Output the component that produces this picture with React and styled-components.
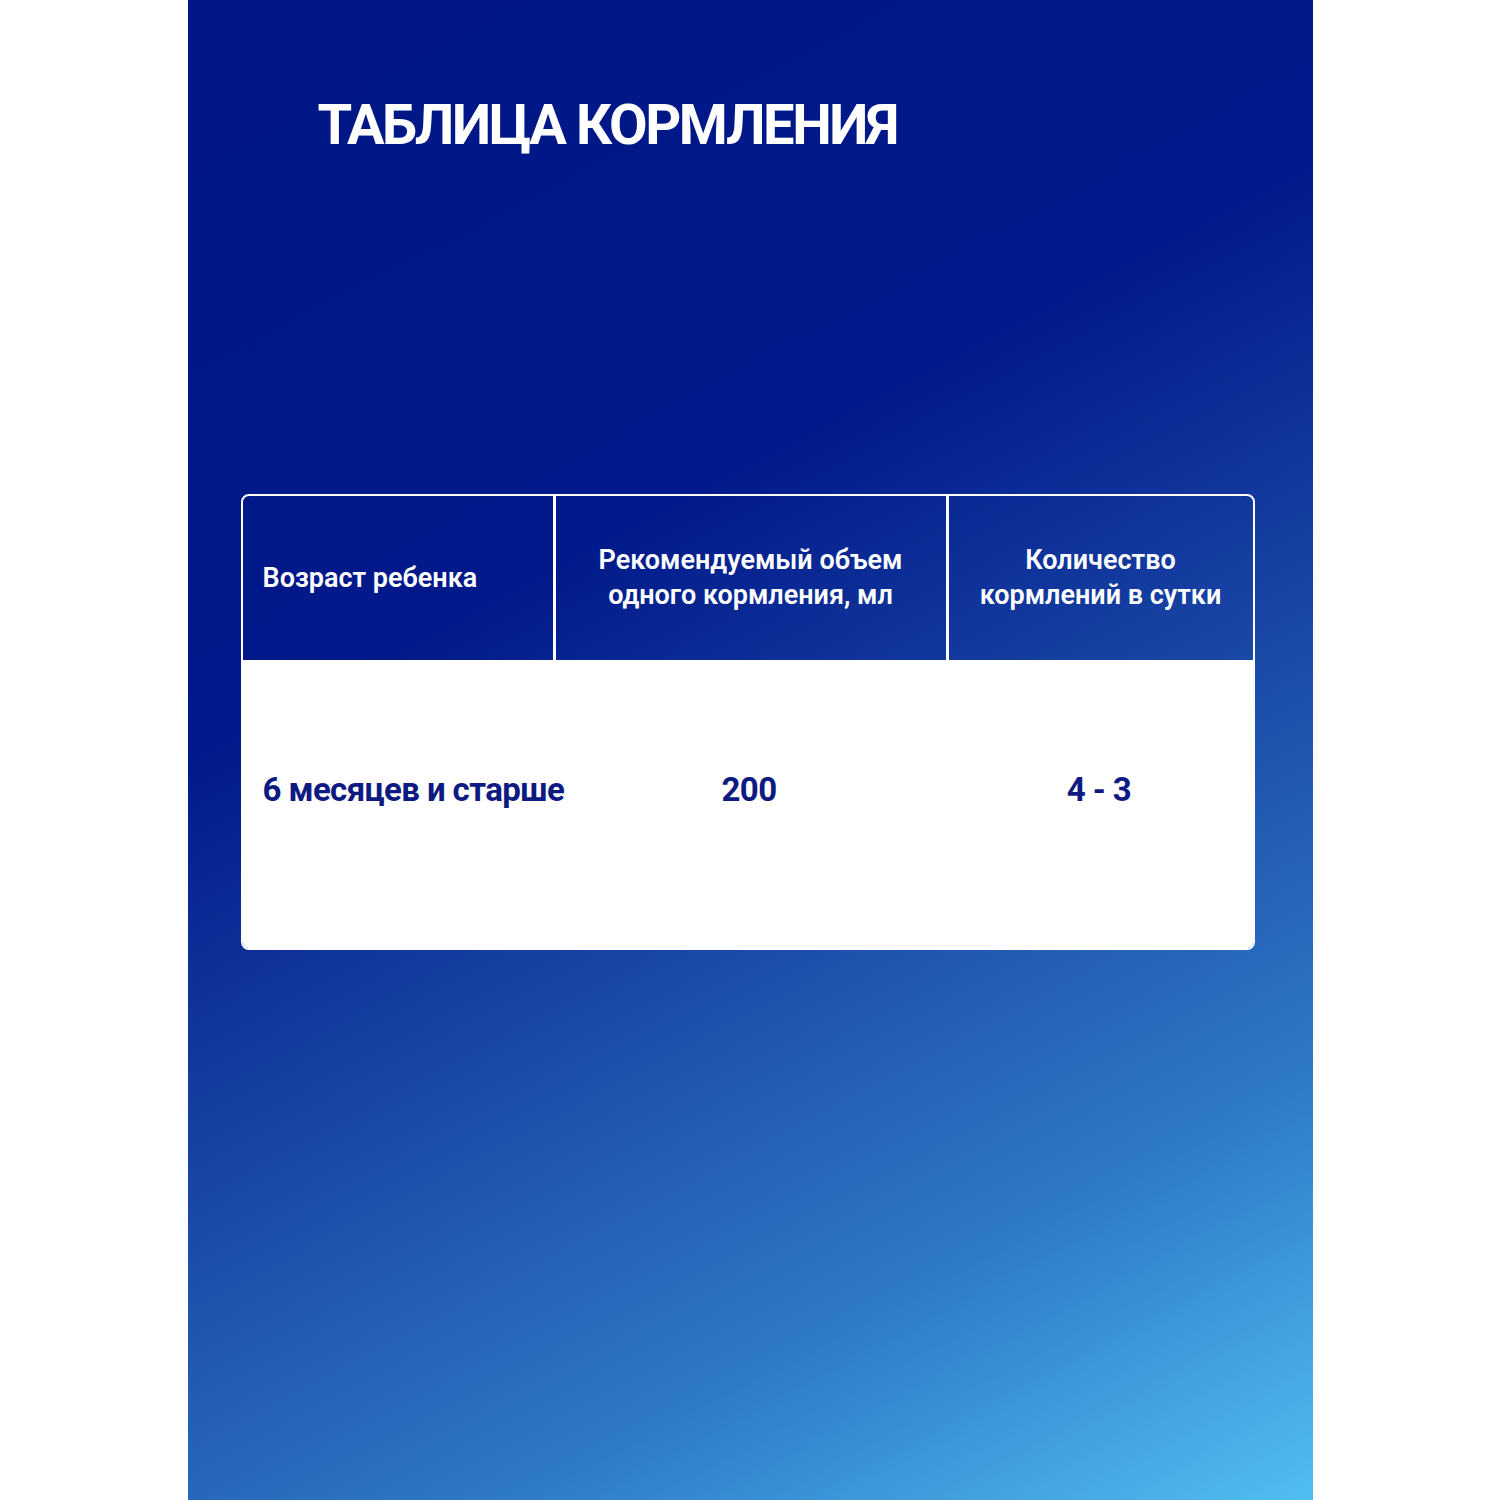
import React from "react";
import styled, { createGlobalStyle } from "styled-components";

const GlobalStyle = createGlobalStyle`
  body {
    margin: 0;
    background: #ffffff;
    font-family: Roboto, "Noto Sans", sans-serif;
  }
`;

const Page = styled.div`
  display: flex;
  justify-content: center;
  width: 1500px;
`;

const Panel = styled.div`
  width: 1125px;
  height: 1500px;
  box-sizing: border-box;
  padding: 92px 58px 0 53px;
  background: linear-gradient(
    152deg,
    #001685 0%,
    #01198a 36%,
    #1a48a7 58%,
    #2f7bc8 80%,
    #50bef0 100%
  );
`;

const Title = styled.h1`
  margin: 0 0 0 77px;
  font-size: 56px;
  line-height: 66px;
  font-weight: 700;
  color: #ffffff;
  letter-spacing: -2.4px;
`;

const Table = styled.div`
  margin-top: 336px;
  width: 1014px;
  border-radius: 8px;
  overflow: hidden;
  border: 2px solid #ffffff;
  box-sizing: border-box;
`;

const Row = styled.div`
  display: grid;
  grid-template-columns: 310px 393px 307px;
  height: ${(p) => (p.$body ? "288px" : "164px")};
  background: ${(p) => (p.$body ? "#ffffff" : "transparent")};
`;

const HeadCell = styled.div`
  box-sizing: border-box;
  display: flex;
  align-items: center;
  justify-content: ${(p) => (p.$left ? "flex-start" : "center")};
  text-align: ${(p) => (p.$left ? "left" : "center")};
  padding: 0 20px;
  border-left: ${(p) => (p.$first ? "none" : "3px solid #ffffff")};
  color: #ffffff;
  font-size: 27px;
  line-height: 35px;
  font-weight: 600;
`;

const BodyCell = styled.div`
  box-sizing: border-box;
  display: flex;
  align-items: center;
  justify-content: ${(p) => (p.$left ? "flex-start" : "center")};
  padding: 0 20px 30px;
  color: #0c1a82;
  font-size: 33px;
  font-weight: 700;
  letter-spacing: -0.6px;
  white-space: nowrap;
`;

export default function App() {
  return (
    <>
      <GlobalStyle />
      <Page>
        <Panel>
          <Title>ТАБЛИЦА КОРМЛЕНИЯ</Title>
          <Table>
            <Row>
              <HeadCell $left $first>Возраст ребенка</HeadCell>
              <HeadCell>
                Рекомендуемый объем
                <br />
                одного кормления, мл
              </HeadCell>
              <HeadCell>
                Количество
                <br />
                кормлений в сутки
              </HeadCell>
            </Row>
            <Row $body>
              <BodyCell $left>6 месяцев и старше</BodyCell>
              <BodyCell>200</BodyCell>
              <BodyCell>4 - 3</BodyCell>
            </Row>
          </Table>
        </Panel>
      </Page>
    </>
  );
}
